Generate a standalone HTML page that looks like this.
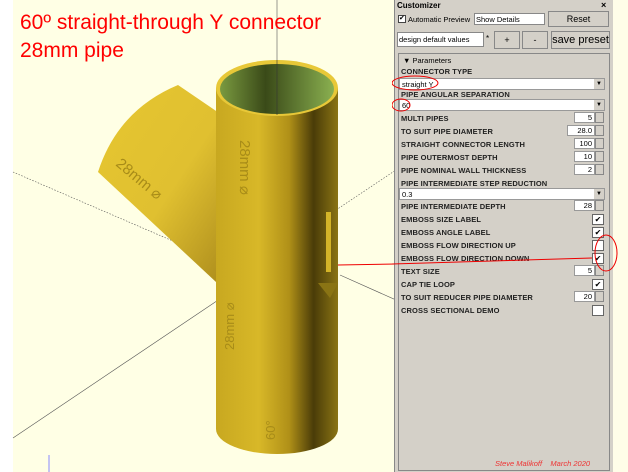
<!DOCTYPE html>
<html><head><style>
*{margin:0;padding:0;box-sizing:border-box}
body{width:628px;height:472px;overflow:hidden;background:#ffffe5;position:relative;font-family:"Liberation Sans",sans-serif}
.a{position:absolute}
.lbl{position:absolute;left:401px;font-size:7.5px;font-weight:bold;color:#222;letter-spacing:0.1px}
.num{position:absolute;background:#fff;border:1px solid #999;font-size:7.5px;text-align:right;padding-right:2px;height:11px;line-height:10px}
.sp{position:absolute;width:9px;height:11px;background:#d4d0c8;border:1px solid #888;left:595px}
.cb{position:absolute;left:592px;width:12px;height:11px;background:#fff;border:1px solid #666;font-size:8px;line-height:9px;text-align:center}
.dd{position:absolute;left:399px;width:206px;height:12px;background:#fff;border:1px solid #999;font-size:7.5px;line-height:11px;padding-left:2px}
.dd:after{content:"▼";position:absolute;right:0;top:0;width:10px;height:10px;background:#d4d0c8;font-size:6px;text-align:center;line-height:10px}
.btn{position:absolute;background:#d4d0c8;border:1px solid #888;font-size:9px;text-align:center}
</style></head><body>
<div class="a" style="left:0;top:0;width:13px;height:472px;background:#fff"></div>
<svg class="a" style="left:0;top:0" width="396" height="472">
<defs>
<linearGradient id="g1" x1="0" x2="1"><stop offset="0" stop-color="#c8a820"/><stop offset=".35" stop-color="#d8b828"/><stop offset=".6" stop-color="#b09018"/><stop offset=".8" stop-color="#4a3c08"/><stop offset="1" stop-color="#8a7414"/></linearGradient>
<linearGradient id="g2" x1="0" y1="0" x2="1" y2="1"><stop offset="0" stop-color="#e6c630"/><stop offset=".5" stop-color="#e0c030"/><stop offset="1" stop-color="#a08018"/></linearGradient>
<linearGradient id="g3" x1="0" x2="1"><stop offset="0" stop-color="#7a9a40"/><stop offset=".4" stop-color="#3a4a18"/><stop offset="1" stop-color="#8ab050"/></linearGradient>
</defs>
<g stroke="#555" stroke-width=".6" fill="none">
<line x1="277" y1="0" x2="277" y2="115"/>
<line x1="13" y1="172" x2="240" y2="270" stroke-dasharray="1.5 1.5"/>
<line x1="13" y1="438" x2="245" y2="282"/>
<line x1="340" y1="275" x2="396" y2="300"/>
<line x1="336" y1="210" x2="396" y2="170" stroke-dasharray="1.5 1.5"/>
</g>
<path d="M178 85 L222 115 L240 300 L216 282 L98 172 Q118 110 178 85 Z" fill="url(#g2)"/>
<path d="M216 88 L216 429 A61 25 0 0 0 338 429 L338 88 Z" fill="url(#g1)"/>
<ellipse cx="277" cy="88" rx="61" ry="28" fill="#e8c838"/>
<ellipse cx="277" cy="89" rx="57" ry="25" fill="url(#g3)"/>
<line x1="277" y1="60" x2="277" y2="115" stroke="#333" stroke-width=".6"/>
<rect x="326" y="212" width="5" height="60" fill="#d4b428"/>
<path d="M318 283 L338 283 L330 298 Z" fill="#8a7414"/>
<text x="0" y="0" font-size="15" fill="#a88c18" transform="translate(240 140) rotate(90)">28mm ⌀</text>
<text x="0" y="0" font-size="15" fill="#a88c18" transform="translate(115 165) rotate(40)">28mm ⌀</text>
<text x="0" y="0" font-size="13" fill="#a88c18" transform="translate(234 350) rotate(-90)">28mm ⌀</text>
<text x="0" y="0" font-size="13" fill="#a88c18" transform="translate(275 440) rotate(-90)">60°</text>
<line x1="49" y1="455" x2="49" y2="472" stroke="#88f" stroke-width="1"/>
<line x1="396" y1="264" x2="338" y2="265" stroke="#e00" stroke-width="1"/>
<text x="20" y="29" font-size="21" fill="#f00">60º straight-through Y connector</text>
<text x="20" y="57" font-size="21" fill="#f00">28mm pipe</text>
</svg>
<div class="a" style="left:394px;top:0;width:219px;height:472px;background:#d4d0c8;border-left:1px solid #888"></div>
<div class="a" style="left:613px;top:0;width:15px;height:472px;background:#fffde8"></div>
<div class="a" style="left:397px;top:1px;font-size:8px;font-weight:bold">Customizer</div>
<div class="a" style="left:601px;top:0;font-size:9px;font-weight:bold">×</div>
<div class="a" style="left:398px;top:15px;width:8px;height:8px;background:#fff;border:1px solid #444;font-size:7px;line-height:6px">✔</div>
<div class="a" style="left:408px;top:15px;font-size:7.5px">Automatic Preview</div>
<div class="a" style="left:474px;top:13px;width:71px;height:12px;background:#fff;border:1px solid #888;font-size:7.5px;line-height:11px;padding-left:1px">Show Details</div>
<div class="btn" style="left:548px;top:11px;width:61px;height:16px;line-height:14px">Reset</div>
<div class="a" style="left:397px;top:32px;width:87px;height:15px;background:#fff;border:1px solid #888;font-size:7.5px;line-height:13px;padding-left:1px">design default values</div>
<div class="a" style="left:486px;top:34px;font-size:8px">*</div>
<div class="btn" style="left:494px;top:31px;width:26px;height:18px;line-height:16px">+</div>
<div class="btn" style="left:522px;top:31px;width:26px;height:18px;line-height:16px">-</div>
<div class="btn" style="left:551px;top:31px;width:59px;height:18px;line-height:16px;font-size:11px">save preset</div>
<div class="a" style="left:398px;top:53px;width:212px;height:418px;border:1px solid #888"></div>
<div class="a" style="left:403px;top:56px;font-size:7.5px">▼ Parameters</div>
<div class="lbl" style="top:67px">CONNECTOR TYPE</div>
<div class="dd" style="top:78px">straight Y</div>
<div class="lbl" style="top:90px">PIPE ANGULAR SEPARATION</div>
<div class="dd" style="top:99px">60</div>
<div class="lbl" style="top:114px">MULTI PIPES</div><div class="num" style="left:574px;top:112px;width:21px">5</div><div class="sp" style="top:112px"></div>
<div class="lbl" style="top:127px">TO SUIT PIPE DIAMETER</div><div class="num" style="left:567px;top:125px;width:28px">28.0</div><div class="sp" style="top:125px"></div>
<div class="lbl" style="top:140px">STRAIGHT CONNECTOR LENGTH</div><div class="num" style="left:574px;top:138px;width:21px">100</div><div class="sp" style="top:138px"></div>
<div class="lbl" style="top:153px">PIPE OUTERMOST DEPTH</div><div class="num" style="left:574px;top:151px;width:21px">10</div><div class="sp" style="top:151px"></div>
<div class="lbl" style="top:166px">PIPE NOMINAL WALL THICKNESS</div><div class="num" style="left:574px;top:164px;width:21px">2</div><div class="sp" style="top:164px"></div>
<div class="lbl" style="top:179px">PIPE INTERMEDIATE STEP REDUCTION</div>
<div class="dd" style="top:188px">0.3</div>
<div class="lbl" style="top:202px">PIPE INTERMEDIATE DEPTH</div><div class="num" style="left:574px;top:200px;width:21px">28</div><div class="sp" style="top:200px"></div>
<div class="lbl" style="top:215px">EMBOSS SIZE LABEL</div><div class="cb" style="top:214px">✔</div>
<div class="lbl" style="top:228px">EMBOSS ANGLE LABEL</div><div class="cb" style="top:227px">✔</div>
<div class="lbl" style="top:241px">EMBOSS FLOW DIRECTION UP</div><div class="cb" style="top:240px"></div>
<div class="lbl" style="top:254px">EMBOSS FLOW DIRECTION DOWN</div><div class="cb" style="top:253px">✔</div>
<div class="lbl" style="top:267px">TEXT SIZE</div><div class="num" style="left:574px;top:265px;width:21px">5</div><div class="sp" style="top:265px"></div>
<div class="lbl" style="top:280px">CAP TIE LOOP</div><div class="cb" style="top:279px">✔</div>
<div class="lbl" style="top:293px">TO SUIT REDUCER PIPE DIAMETER</div><div class="num" style="left:574px;top:291px;width:21px">20</div><div class="sp" style="top:291px"></div>
<div class="lbl" style="top:306px">CROSS SECTIONAL DEMO</div><div class="cb" style="top:305px"></div>
<svg class="a" style="left:392px;top:60px" width="230" height="260">
<g fill="none" stroke="#e00" stroke-width="1">
<ellipse cx="23" cy="23" rx="23" ry="7"/>
<ellipse cx="9" cy="45" rx="9" ry="6"/>
<ellipse cx="214" cy="193" rx="11" ry="18"/>
<line x1="0" y1="204" x2="200" y2="198"/>
</g></svg>
<div class="a" style="left:495px;top:459px;font-size:7.5px;font-style:italic;color:#e33">Steve Malikoff &nbsp;&nbsp; March 2020</div>
</body></html>
